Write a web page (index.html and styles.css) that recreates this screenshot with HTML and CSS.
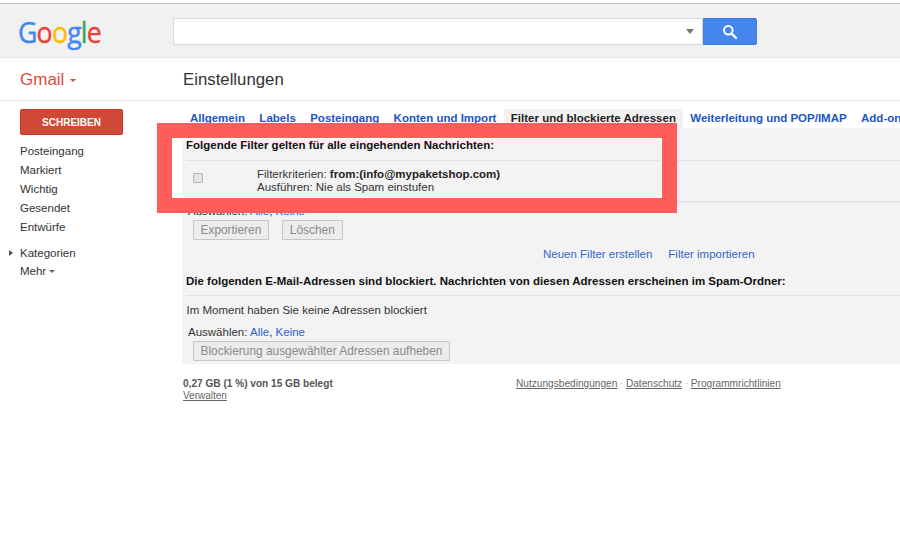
FILE: index.html
```html
<!DOCTYPE html>
<html lang="de">
<head>
<meta charset="utf-8">
<title>Einstellungen</title>
<link rel="stylesheet" href="styles.css">
</head>
<body>
<div class="topline"></div>
<header class="masthead">
  <div class="logo-box"><div class="logo" aria-label="Google"><span class="b">G</span><span class="r">o</span><span class="y">o</span><span class="b">g</span><span class="g">l</span><span class="r">e</span></div></div>
  <div class="search">
    <div class="search-input"><span class="search-caret"></span></div>
    <button class="search-btn" aria-label="Suche">
      <svg width="16" height="16" viewBox="0 0 16 16"><circle cx="6.3" cy="6.3" r="4.3" fill="none" stroke="#fff" stroke-width="2"/><path d="M9.6 9.6 14 14" stroke="#fff" stroke-width="2.4" stroke-linecap="round"/></svg>
    </button>
  </div>
</header>
<div class="subbar">
  <div class="gmail">Gmail<span class="gmail-caret"></span></div>
  <h1 class="title">Einstellungen</h1>
</div>
<div class="body">
  <nav class="side">
    <button class="compose">SCHREIBEN</button>
    <ul class="labels">
      <li>Posteingang</li>
      <li>Markiert</li>
      <li>Wichtig</li>
      <li>Gesendet</li>
      <li>Entwürfe</li>
    </ul>
    <div class="cat"><span class="cat-arrow"></span>Kategorien</div>
    <div class="more">Mehr<span class="more-caret"></span></div>
  </nav>
  <main class="main">
    <div class="tabs">
      <a class="tab">Allgemein</a>
      <a class="tab">Labels</a>
      <a class="tab">Posteingang</a>
      <a class="tab">Konten und Import</a>
      <a class="tab active">Filter und blockierte Adressen</a>
      <a class="tab">Weiterleitung und POP/IMAP</a>
      <a class="tab">Add-ons</a>
    </div>
    <div class="panel">
      <div class="heading h1st">Folgende Filter gelten für alle eingehenden Nachrichten:</div>
      <div class="filter-row">
        <span class="check"></span>
        <div class="filter-text">
          <div>Filterkriterien: <b>from:(info@mypaketshop.com)</b></div>
          <div>Ausführen: Nie als Spam einstufen</div>
        </div>
      </div>
      <div class="select sel1">Auswählen: <a>Alle</a>, <a>Keine</a></div>
      <div class="btns">
        <span class="btn">Exportieren</span>
        <span class="btn">Löschen</span>
      </div>
      <div class="filter-links"><a>Neuen Filter erstellen</a><a>Filter importieren</a></div>
      <div class="heading h2nd">Die folgenden E-Mail-Adressen sind blockiert. Nachrichten von diesen Adressen erscheinen im Spam-Ordner:</div>
      <div class="none">Im Moment haben Sie keine Adressen blockiert</div>
      <div class="select sel2">Auswählen: <a>Alle</a>, <a>Keine</a></div>
      <div class="btns btns2"><span class="btn">Blockierung ausgewählter Adressen aufheben</span></div>
    </div>
    <footer class="foot">
      <div class="usage"><b>0,27 GB (1 %) von 15 GB belegt</b><a>Verwalten</a></div>
      <div class="legal"><a>Nutzungsbedingungen</a><i>·</i><a>Datenschutz</a><i>·</i><a>Programmrichtlinien</a></div>
    </footer>
  </main>
</div>
<div class="highlight"></div>
</body>
</html>
```
FILE: styles.css
```css
* { box-sizing: border-box; }
html, body { margin: 0; height: 100%; }
body { width: 900px; height: 550px; overflow: hidden; background: #fff; font-family: "Liberation Sans", Arial, sans-serif; font-size: 12.5px; color: #333; position: relative; }
a { color: #1a56c4; text-decoration: none; }

.topline { height: 4px; background: #fff; border-bottom: 1px solid #c4c4c4; }
.masthead { height: 54px; background: #f1f1f1; border-bottom: 1px solid #e5e5e5; display: flex; align-items: flex-start; }
.logo-box { width: 173px; padding: 8px 0 0 18px; }
.logo { font-family: "Open Sans", sans-serif; font-size: 30px; line-height: 40px; letter-spacing: -.9px; transform: scaleX(.89); transform-origin: left center; -webkit-text-stroke: .4px; white-space: nowrap; }
.logo .b { color: #4285f4; } .logo .r { color: #ea4335; } .logo .y { color: #fbbc05; } .logo .g { color: #34a853; }
.search { display: flex; margin-top: 14px; height: 27px; }
.search-input { width: 530px; background: #fff; border: 1px solid #d9d9d9; display: flex; align-items: center; justify-content: flex-end; padding-right: 8px; }
.search-caret { border: 4px solid transparent; border-top: 5px solid #777; border-bottom: 0; }
.search-btn { width: 54px; padding: 0; background: #4585ee; border: 1px solid #3f7ce0; border-radius: 0 2px 2px 0; display: flex; align-items: center; justify-content: center; }

.subbar { height: 43px; border-bottom: 1px solid #e5e5e5; display: flex; align-items: center; padding-top: 2px; }
.gmail { width: 182px; padding-left: 20px; color: #dd4b39; font-size: 17px; display: flex; align-items: center; }
.gmail-caret { margin-left: 6px; border: 3px solid transparent; border-top: 3px solid #dd4b39; border-bottom: 0; }
.title { margin: 0 0 0 1px; font-weight: 400; font-size: 16.8px; color: #333; }

.body { display: flex; }
.side { width: 182px; padding: 8px 0 0 20px; flex: none; }
.compose { display: block; width: 103px; height: 26px; padding: 0; background: #d14836; border: 1px solid #c53727; border-radius: 2px; color: #fff; font: 700 10px "Liberation Sans", sans-serif; }
.labels { list-style: none; margin: 7px 0 0; padding: 0; }
.labels li { height: 19px; line-height: 19px; font-size: 11.5px; color: #333; }
.cat { position: relative; margin-top: 7px; height: 18px; line-height: 18px; font-size: 11.5px; }
.cat-arrow { position: absolute; left: -11px; top: 6px; border: 3.5px solid transparent; border-left: 4px solid #555; border-right: 0; }
.more { height: 19px; line-height: 19px; font-size: 11.5px; display: flex; align-items: center; }
.more-caret { margin-left: 3px; border: 3px solid transparent; border-top: 3px solid #666; border-bottom: 0; }

.main { flex: 1; min-width: 0; }
.tabs { display: flex; align-items: flex-end; height: 27px; padding-left: 1px; white-space: nowrap; font-size: 11.5px; font-weight: 700; overflow: hidden; }
.tab { padding: 0 7px; line-height: 18px; height: 19px; margin-right: .4px; flex: none; }
.active { background: #f1f1f1; color: #222; }
.panel { background: #f3f3f3; height: 236px; position: relative; padding-top: 10px; }
.heading { font-weight: 700; font-size: 11.5px; color: #111; margin-left: 4px; line-height: 15px; border-bottom: 1px solid #e2e2e2; }
.h1st { height: 23px; }
.filter-row { display: flex; height: 42px; align-items: flex-start; border-bottom: 2px solid #e6e6e6; margin-left: 4px; }
.check { width: 10px; height: 10px; margin: 12px 0 0 7px; flex: none; border: 1px solid #b5b5b5; border-radius: 2px; background: #e6e6e6; }
.filter-text { margin: 7px 0 0 54px; font-size: 11.5px; line-height: 13px; color: #333; }
.filter-text b { font-weight: 700; font-size: 11.5px; color: #222; }
.select { font-size: 11.5px; line-height: 14px; padding-left: 6px; color: #333; }
.select a { color: #2a62cf; }
.sel1 { margin-top: 1px; }
.btns { display: flex; gap: 13px; padding-left: 11px; margin-top: 2px; }
.btn { height: 20px; line-height: 18px; padding: 0 7px 0 6.5px; font-size: 11.9px; color: #8a8a8a; background: #ececec; border: 1px solid #c6c6c6; border-radius: 1px; }
.filter-links { display: flex; gap: 16px; padding-left: 361px; margin-top: 6px; line-height: 16px; font-size: 11.5px; }
.filter-links a { color: #3367c5; }
.h2nd { margin-top: 12px; height: 22px; }
.none { padding-left: 4.5px; margin-top: 6px; line-height: 16px; font-size: 11.5px; color: #333; }
.sel2 { margin-top: 7px; }
.foot { display: flex; padding: 14px 0 0 1px; font-size: 10px; line-height: 12px; }
.usage { width: 333px; display: flex; flex-direction: column; color: #555; }
.usage b { font-size: 10.1px; line-height: 12px; }
.usage a, .legal a { color: #666; text-decoration: underline; }
.legal { font-size: 10.15px; }
.legal i { font-style: normal; padding: 0 2.6px; color: #aaa; }

.highlight { position: absolute; left: 157px; top: 123px; width: 520px; height: 90px; border: 15px solid #ff5c5c; box-shadow: inset 0 0 0 1px #fff; }
```
